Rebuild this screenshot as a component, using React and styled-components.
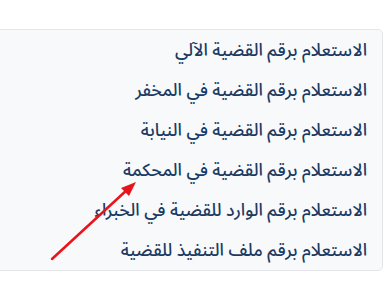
import React from 'react';
import { styled, createGlobalStyle } from 'styled-components';

const GlobalStyle = createGlobalStyle`
  html, body {
    margin: 0;
    padding: 0;
    background: #ffffff;
  }
  body {
    width: 390px;
    height: 288px;
    overflow: hidden;
    font-family: "Noto Sans Arabic", "DejaVu Sans", sans-serif;
  }
`;

const items = [
  'الاستعلام برقم القضية الآلي',
  'الاستعلام برقم القضية في المخفر',
  'الاستعلام برقم القضية في النيابة',
  'الاستعلام برقم القضية في المحكمة',
  'الاستعلام برقم الوارد للقضية في الخبراء',
  'الاستعلام برقم ملف التنفيذ للقضية',
];

const App = () => {
  return (
    <Page>
      <GlobalStyle />
      <Panel>
        <List dir="rtl">
          {items.map((text) => (
            <Item key={text}>
              <ItemLink href="#">{text}</ItemLink>
            </Item>
          ))}
        </List>
      </Panel>
      <Arrow width="390" height="288" viewBox="0 0 390 288">
        <line x1="52" y1="259" x2="128" y2="189" stroke="#e8141b" strokeWidth="2.5" strokeLinecap="round" />
        <polygon points="136,182 121,188 129,196" fill="#e8141b" />
      </Arrow>
    </Page>
  );
};

export default App;

const Page = styled.div`
  position: relative;
  width: 390px;
  height: 288px;
  padding-top: 29px;
  box-sizing: border-box;
`;

const Panel = styled.div`
  margin: 0 7px 0 -8px;
  background-color: #f8f9fb;
  border: 1px solid #e3e5e8;
  border-radius: 5px;
`;

const List = styled.ul`
  list-style: none;
  margin: 0;
  padding: 0 15px 0 0;
`;

const Item = styled.li`
  height: 40px;
  display: flex;
  align-items: center;
`;

const ItemLink = styled.a`
  color: #1b3b63;
  font-size: 17.5px;
  font-weight: 500;
  text-decoration: none;
  white-space: nowrap;
`;

const Arrow = styled.svg`
  position: absolute;
  top: 0;
  left: 0;
  pointer-events: none;
`;
